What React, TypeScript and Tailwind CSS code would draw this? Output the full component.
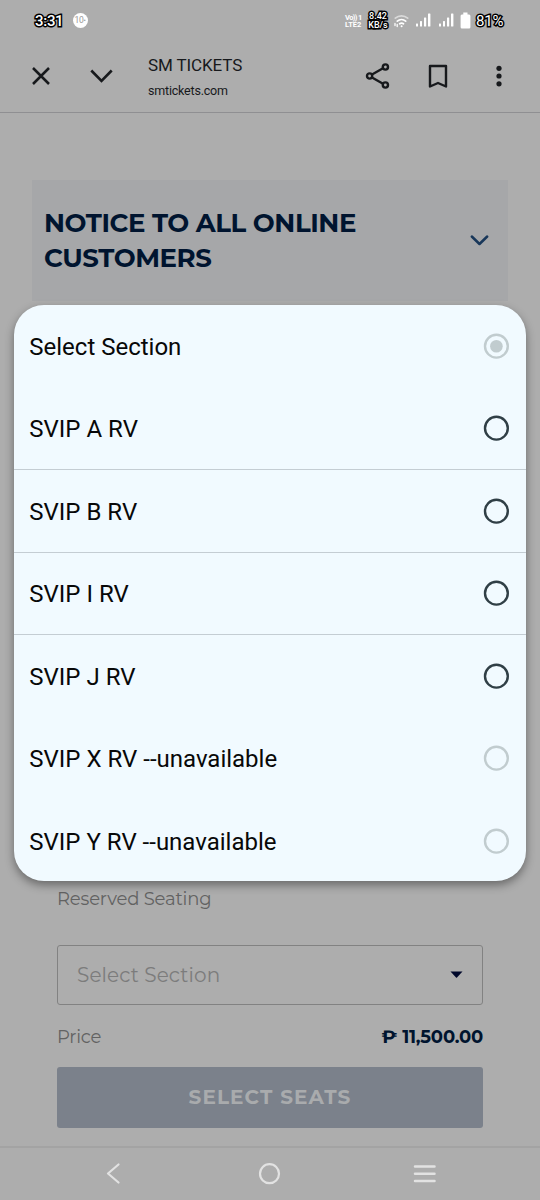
import { ReactNode } from 'react';

interface SectionOption {
  label: string;
  disabled?: boolean;
  selected?: boolean;
  /** Hairline under the row, only drawn between two enabled rows. */
  divider?: boolean;
}

const OPTIONS: SectionOption[] = [
  { label: 'Select Section', disabled: true, selected: true },
  { label: 'SVIP A RV', divider: true },
  { label: 'SVIP B RV', divider: true },
  { label: 'SVIP I RV', divider: true },
  { label: 'SVIP J RV' },
  { label: 'SVIP X RV --unavailable', disabled: true },
  { label: 'SVIP Y RV --unavailable', disabled: true },
];

function Outlined({ className, children }: { className: string; children: ReactNode }) {
  return (
    <span className={`block whitespace-nowrap text-white [paint-order:stroke_fill] [-webkit-text-stroke-color:#000] ${className}`}>
      {children}
    </span>
  );
}

function Signal() {
  return (
    <svg width="15" height="14" viewBox="0 0 15 14" fill="#fff">
      <rect x="0" y="10.5" width="2" height="3" rx="0.5" />
      <rect x="4" y="8" width="2" height="5.5" rx="0.5" />
      <rect x="8" y="4.5" width="2.2" height="9" rx="0.5" />
      <rect x="12" y="0.5" width="2.4" height="13" rx="0.5" />
    </svg>
  );
}

function StatusBar() {
  return (
    <div className="flex h-10 items-center pl-[35px] pr-[35px] pt-[1px] font-[Roboto,sans-serif]">
      <Outlined className="w-[28px] text-[15px] font-medium leading-5 tracking-[-0.3px] [-webkit-text-stroke-width:3px]">3:31</Outlined>
      <span className="ml-[9.5px] flex h-[15px] w-[15px] items-center justify-center rounded-full bg-white text-[8.5px] leading-none tracking-[-0.3px] text-[#999]">
        10<span className="pt-[2px] text-[7px]">•</span>
      </span>

      <div className="ml-auto flex items-center">
        <div className="w-[20px] whitespace-nowrap text-[7.5px] font-bold leading-[7px] text-white">
          <div className="tracking-[-0.6px]">Vo)) 1</div>
          <div>LTE2</div>
        </div>
        <div className="ml-[3px] flex w-[20px] flex-col items-center">
          <Outlined className="text-[9px] font-medium leading-[9px] [-webkit-text-stroke-width:3px]">8.42</Outlined>
          <Outlined className="text-[9px] font-medium leading-[9px] [-webkit-text-stroke-width:3px]">KB/s</Outlined>
        </div>
        <svg className="ml-[5px]" width="17" height="14" viewBox="0 0 17 14" fill="none" stroke="#fff" strokeWidth="1.700" strokeLinecap="round">
          <path d="M2.300 4.200a9.500 9.500 0 0 1 12.400 0" opacity="0.55" />
          <path d="M4.300 7.100a6.600 6.600 0 0 1 8.400 0" />
          <path d="M6.700 9.800a3.200 3.200 0 0 1 3.800 0" />
          <circle cx="8.600" cy="12.200" r="1" fill="#fff" stroke="none" />
          <path d="M2 9.500v2M4.200 10.500v2" strokeWidth="1.300" />
        </svg>
        <span className="-mt-[1px] ml-[6px]"><Signal /></span>
        <span className="-mt-[1px] ml-[8px]"><Signal /></span>
        <svg className="-mt-[1px] ml-[6px]" width="11" height="17" viewBox="0 0 11 17" fill="#fff">
          <path d="M3.3.5h4.2v2H9A1.4 1.4 0 0 1 10.4 4v11A1.4 1.4 0 0 1 9 16.500H2A1.4 1.4 0 0 1 .6 15V4A1.4 1.4 0 0 1 2 2.500h1.300z" />
        </svg>
        <Outlined className="ml-[5px] w-[29px] text-[15px] leading-5 tracking-[-0.2px] [-webkit-text-stroke-width:3px]">81%</Outlined>
      </div>
    </div>
  );
}

function BrowserBar() {
  return (
    <header className="flex h-[73px] items-center border-b border-[#8f8f92] pl-[29px] pr-[35px] text-[#17191c]">
      <svg width="24" height="24" viewBox="0 0 24 24" fill="none" stroke="currentColor" strokeWidth="2.500">
        <path d="M4 4l16 16M20 4L4 20" />
      </svg>
      <svg className="ml-[36px]" width="26" height="24" viewBox="0 0 26 24" fill="none" stroke="currentColor" strokeWidth="2.600">
        <path d="M2.300 6.500L12.500 17 22.700 6.500" />
      </svg>
      <div className="ml-[33px] whitespace-nowrap pt-[2px] font-[Roboto,sans-serif]">
        <div className="text-[17px] leading-6 tracking-[-0.1px]">SM TICKETS</div>
        <div className="mt-[4px] text-[12.5px] leading-5 tracking-[-0.2px]">smtickets.com</div>
      </div>
      <svg className="ml-auto" width="26" height="28" viewBox="0 0 26 28" fill="none" stroke="currentColor" strokeWidth="2.400">
        <path d="M7 12.500l11-6.300M7 15.500l11 6.300" />
        <circle cx="4.600" cy="14" r="2.600" />
        <circle cx="20.400" cy="5" r="2.600" />
        <circle cx="20.400" cy="23" r="2.600" />
      </svg>
      <svg className="ml-[37px]" width="20" height="24" viewBox="0 0 20 24" fill="none" stroke="currentColor" strokeWidth="2.400" strokeLinejoin="round">
        <path d="M2 2h16v20.500L10 19l-8 3.500z" />
      </svg>
      <svg className="ml-[45px]" width="12" height="24" viewBox="0 0 12 24" fill="currentColor">
        <circle cx="6" cy="4.300" r="2.600" />
        <circle cx="6" cy="12" r="2.600" />
        <circle cx="6" cy="19.800" r="2.600" />
      </svg>
    </header>
  );
}

function RadioMark({ option }: { option: SectionOption }) {
  return (
    <svg className={option.disabled ? 'text-[#c1cccf]' : 'text-[#303f46]'} width="26" height="26" viewBox="0 0 26 26" fill="none">
      <circle cx="13.400" cy="13.200" r="11.400" stroke="currentColor" strokeWidth="2.400" />
      {option.selected && <circle cx="13.400" cy="13.200" r="6.300" fill="currentColor" />}
    </svg>
  );
}

/** Native-looking option list that floats over the dimmed page. */
function SectionPicker() {
  return (
    <ul
      role="listbox"
      className="absolute left-[14px] top-[305px] h-[576px] w-[512px] overflow-hidden rounded-[30px] bg-[#f1faff] font-[Roboto,sans-serif] shadow-[0_4px_10px_rgba(0,0,0,0.4)]"
    >
      {OPTIONS.map((option) => (
        <li
          key={option.label}
          role="option"
          aria-selected={!!option.selected}
          className={`flex h-[82.5px] items-center justify-between border-b pl-[15.3px] pr-[17px] ${option.divider ? 'border-[#c4cdd3]' : 'border-transparent'}`}
        >
          <span className="pt-[1.5px] text-[24px] leading-8 text-[#080808]">{option.label}</span>
          <RadioMark option={option} />
        </li>
      ))}
    </ul>
  );
}

export default function App() {
  return (
    <div className="relative flex h-[1200px] w-[540px] flex-col overflow-hidden bg-[#adadad]">
      <StatusBar />
      <BrowserBar />

      <main className="flex flex-1 flex-col font-[Montserrat,Inter,sans-serif]">
        <section className="mx-8 mt-[67px] flex h-[121px] items-center justify-between bg-[#a6a7a9] pl-[12px] pr-[19px]">
          <h1 className="whitespace-nowrap text-[26px] font-bold leading-[35px] tracking-[-0.42px] text-[#00142f]">
            NOTICE TO ALL ONLINE
            <br />
            CUSTOMERS
          </h1>
          <svg width="20" height="14" viewBox="0 0 20 14" fill="none" stroke="#18375a" strokeWidth="2.500" strokeLinecap="round" strokeLinejoin="round">
            <path d="M2.800 2.500L10.500 10 18.200 2.500" />
          </svg>
        </section>

        <section className="mx-[57px] mt-auto flex flex-col pb-[18px]">
          <p className="text-[18px] leading-6 tracking-[-0.18px] text-[#626262]">Reserved Seating</p>
          <div className="mt-[34px] flex h-[60px] items-center justify-between rounded-[3px] border border-[#828282] pl-[19px] pr-[19px]">
            <span className="text-[20px] tracking-[0.1px] text-[#7c7c7c]">Select Section</span>
            <svg width="13" height="8" viewBox="0 0 13 8" fill="#00082b">
              <path d="M.5.500h12L7 6.500a.8.800 0 0 1-1 0z" />
            </svg>
          </div>
          <div className="mt-[19px] flex h-6 items-center justify-between">
            <span className="pt-[2px] text-[18px] tracking-[-0.2px] text-[#626262]">Price</span>
            <span className="pt-[2px] text-[18px] font-bold tracking-[-0.2px] text-[#00142f]">₱ 11,500.00</span>
          </div>
          <button className="mt-[19px] h-[61px] rounded-[3px] bg-[#7b818b] pb-[2px] text-[20px] font-bold tracking-[1.1px] text-[#a9abad]">
            SELECT SEATS
          </button>
        </section>
      </main>

      <nav className="flex h-[54px] items-center border-t-2 border-[#a3a3a3] pl-[101px] pr-[101px] text-[#e2e2e2]">
        <svg width="24" height="24" viewBox="0 0 24 24" fill="none" stroke="currentColor" strokeWidth="2.200" strokeLinecap="round" strokeLinejoin="round">
          <path d="M17.500 2.500L7 11.500l10.500 9" />
        </svg>
        <svg className="ml-[132px]" width="24" height="24" viewBox="0 0 24 24" fill="none" stroke="currentColor" strokeWidth="2.200">
          <circle cx="12.500" cy="11.700" r="9.500" />
        </svg>
        <svg className="ml-auto" width="26" height="24" viewBox="0 0 26 24" fill="none" stroke="currentColor" strokeWidth="2.500" strokeLinecap="round">
          <path d="M2 4.500h19.500M2 11.700h19.500M2 19h19.500" />
        </svg>
      </nav>

      <SectionPicker />
    </div>
  );
}
